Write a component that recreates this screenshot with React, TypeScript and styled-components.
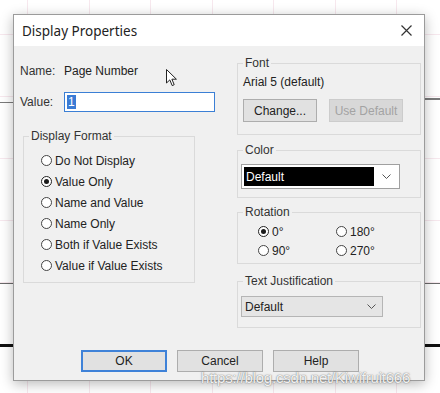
import styled, { createGlobalStyle } from "styled-components";

const GlobalStyle = createGlobalStyle`
  html, body {
    margin: 0;
    padding: 0;
  }
  body {
    width: 440px;
    height: 393px;
    overflow: hidden;
    font-family: "Liberation Sans", Arial, sans-serif;
    background:
      linear-gradient(#7a7a7a, #7a7a7a) 0 102px / 14px 1px no-repeat,
      linear-gradient(#7a7a7a, #7a7a7a) 424px 98px / 16px 2px no-repeat,
      linear-gradient(#6a6a6a, #6a6a6a) 0 283px / 440px 1px no-repeat,
      linear-gradient(#111, #111) 0 344px / 440px 3px no-repeat,
      repeating-linear-gradient(90deg, transparent 0 27px, #f7e8ee 27px 28px, transparent 28px 61.5px),
      repeating-linear-gradient(180deg, transparent 0 34px, #f7e8ee 34px 35px, transparent 35px 62px),
      #fff;
  }
`;

const Page = styled.div`
  position: relative;
  padding: 14px 15px 12px 13px;
`;

const Dialog = styled.div`
  position: relative;
  box-sizing: border-box;
  width: 412px;
  height: 367px;
  display: flex;
  flex-direction: column;
  background: #f0f0f0;
  border: 1px solid #9b9b9b;
  box-shadow: 0 3px 12px rgba(0, 0, 0, 0.28);
`;

const TitleBar = styled.div`
  height: 31px;
  display: flex;
  align-items: center;
  justify-content: space-between;
  padding: 0 12px 0 8px;
  background: #fff;
`;

const Title = styled.span`
  font-family: "Noto Sans", "Open Sans", sans-serif;
  font-size: 13.5px;
  color: #222;
`;

const Body = styled.div`
  flex: 1;
  display: flex;
  flex-direction: column;
  padding: 9px 3px 8px 6px;
  font-size: 12px;
  color: #222;
`;

const Columns = styled.div`
  display: grid;
  grid-template-columns: 210px 184px;
  column-gap: 7px;
  align-items: start;
`;

const Column = styled.div<{ $top?: number }>`
  display: flex;
  flex-direction: column;
  padding-top: ${(p) => p.$top ?? 0}px;
`;

const FieldRow = styled.div<{ $h: number; $top: number }>`
  display: flex;
  align-items: center;
  height: ${(p) => p.$h}px;
  margin-top: ${(p) => p.$top}px;
`;

const FieldLabel = styled.span`
  width: 44px;
  color: #333;
`;

const TextInput = styled.div`
  box-sizing: border-box;
  width: 151px;
  height: 20px;
  display: flex;
  align-items: center;
  padding-left: 2px;
  background: #fff;
  border: 1px solid #3b7fd5;
`;

const Selected = styled.span`
  background: #3a7bd5;
  color: #fff;
  line-height: 14px;
  padding: 0 1px;
`;

const GroupBox = styled.fieldset<{ $w: number; $top: number; $left?: number }>`
  box-sizing: border-box;
  width: ${(p) => p.$w}px;
  margin: ${(p) => p.$top}px 0 0 ${(p) => p.$left ?? 0}px;
  padding: 0;
  border: 1px solid #dadada;
  min-width: 0;
`;

const Legend = styled.legend`
  margin-left: 5px;
  padding: 0 2px;
  font-size: 12px;
  line-height: 14px;
  color: #333;
`;

const GroupBody = styled.div<{ $pad: string }>`
  padding: ${(p) => p.$pad};
`;

const RadioList = styled.div<{ $cols: number; $row: number }>`
  display: grid;
  grid-template-columns: repeat(${(p) => p.$cols}, 78px);
  grid-auto-rows: ${(p) => p.$row}px;
`;

const RadioItem = styled.label`
  display: flex;
  align-items: center;
  gap: 3px;
  white-space: nowrap;
  color: #222;
`;

const RadioCircle = styled.span<{ $on?: boolean }>`
  box-sizing: border-box;
  flex-shrink: 0;
  width: 11px;
  height: 11px;
  border-radius: 50%;
  border: 1px solid ${(p) => (p.$on ? "#222" : "#444")};
  background: #fff;
  display: flex;
  align-items: center;
  justify-content: center;

  &::after {
    content: "";
    display: ${(p) => (p.$on ? "block" : "none")};
    width: 5px;
    height: 5px;
    border-radius: 50%;
    background: #1a1a1a;
  }
`;

const InfoText = styled.div`
  height: 14px;
  line-height: 14px;
`;

const ButtonRow = styled.div<{ $gap: number; $top: number }>`
  display: flex;
  gap: ${(p) => p.$gap}px;
  margin-top: ${(p) => p.$top}px;
`;

const Button = styled.button<{ $w: number; $h: number; $focus?: boolean }>`
  box-sizing: border-box;
  width: ${(p) => p.$w}px;
  height: ${(p) => p.$h}px;
  padding: 0;
  font-family: "Liberation Sans", Arial, sans-serif;
  font-size: 12px;
  color: ${(p) => (p.disabled ? "#a3a3a3" : "#222")};
  background: ${(p) => (p.disabled ? "#d8d8d8" : "#e1e1e1")};
  border: ${(p) => (p.$focus ? "2px solid #3f82d8" : p.disabled ? "1px solid #cccccc" : "1px solid #adadad")};
`;

const SelectBox = styled.div<{ $w: number; $h: number; $flat?: boolean }>`
  box-sizing: border-box;
  width: ${(p) => p.$w}px;
  height: ${(p) => p.$h}px;
  display: flex;
  align-items: center;
  padding: ${(p) => (p.$flat ? "0 6px 0 3px" : "2px 8px 2px 2px")};
  gap: 8px;
  background: ${(p) => (p.$flat ? "#e5e5e5" : "#fff")};
  border: 1px solid ${(p) => (p.$flat ? "#b5b5b5" : "#a0a0a0")};
`;

const Swatch = styled.div`
  flex: 1;
  align-self: stretch;
  display: flex;
  align-items: center;
  padding-left: 2px;
  background: #000;
  color: #fff;
`;

const SelectText = styled.span`
  flex: 1;
  color: #222;
`;

const Footer = styled.div`
  margin-top: auto;
  display: flex;
  gap: 10px;
  padding-left: 61px;
`;

const Cursor = styled.svg`
  position: absolute;
  left: 152px;
  top: 54px;
`;

const Watermark = styled.div`
  position: absolute;
  left: 201px;
  top: 369px;
  font-family: "Liberation Sans", Arial, sans-serif;
  font-size: 15px;
  letter-spacing: -0.2px;
  color: rgba(255, 255, 255, 0.92);
  text-shadow: 0 0 1px rgba(80, 80, 80, 0.8), 0 0 2px rgba(120, 120, 120, 0.5);
`;

const Chevron = ({ w = 9 }: { w?: number }) => (
  <svg width={w} height="5" viewBox="0 0 9 5">
    <polyline points="0.5,0.5 4.5,4.5 8.5,0.5" fill="none" stroke="#555" strokeWidth="1" />
  </svg>
);

const formats = [
  "Do Not Display",
  "Value Only",
  "Name and Value",
  "Name Only",
  "Both if Value Exists",
  "Value if Value Exists",
];

const rotations = ["0°", "180°", "90°", "270°"];

export default function App() {
  return (
    <>
      <GlobalStyle />
      <Page>
        <Dialog>
          <TitleBar>
            <Title>Display Properties</Title>
            <svg width="11" height="11" viewBox="0 0 11 11">
              <path d="M0.5 0.5 L10.5 10.5 M10.5 0.5 L0.5 10.5" stroke="#333" strokeWidth="1.2" />
            </svg>
          </TitleBar>
          <Body>
            <Columns>
              <Column>
                <FieldRow $h={16} $top={8}>
                  <FieldLabel>Name:</FieldLabel>
                  <span>Page Number</span>
                </FieldRow>
                <FieldRow $h={21} $top={12}>
                  <FieldLabel>Value:</FieldLabel>
                  <TextInput>
                    <Selected>1</Selected>
                  </TextInput>
                </FieldRow>
                <GroupBox $w={172} $top={17} $left={3}>
                  <Legend>Display Format</Legend>
                  <GroupBody $pad="7px 0 6px 17px">
                    <RadioList $cols={1} $row={21}>
                      {formats.map((f, i) => (
                        <RadioItem key={f}>
                          <RadioCircle $on={i === 1} />
                          {f}
                        </RadioItem>
                      ))}
                    </RadioList>
                  </GroupBody>
                </GroupBox>
              </Column>

              <Column $top={1}>
                <GroupBox $w={184} $top={0}>
                  <Legend>Font</Legend>
                  <GroupBody $pad="5px 0 12px 5px">
                    <InfoText>Arial 5 (default)</InfoText>
                    <ButtonRow $gap={12} $top={10}>
                      <Button $w={74} $h={23}>Change...</Button>
                      <Button $w={74} $h={23} disabled>
                        Use Default
                      </Button>
                    </ButtonRow>
                  </GroupBody>
                </GroupBox>

                <GroupBox $w={184} $top={8}>
                  <Legend>Color</Legend>
                  <GroupBody $pad="7px 0 8px 3px">
                    <SelectBox $w={159} $h={25}>
                      <Swatch>Default</Swatch>
                      <Chevron />
                    </SelectBox>
                  </GroupBody>
                </GroupBox>

                <GroupBox $w={184} $top={7}>
                  <Legend>Rotation</Legend>
                  <GroupBody $pad="3px 0 3px 20px">
                    <RadioList $cols={2} $row={19}>
                      {rotations.map((r, i) => (
                        <RadioItem key={r}>
                          <RadioCircle $on={i === 0} />
                          {r}
                        </RadioItem>
                      ))}
                    </RadioList>
                  </GroupBody>
                </GroupBox>

                <GroupBox $w={184} $top={10}>
                  <Legend>Text Justification</Legend>
                  <GroupBody $pad="8px 0 10px 3px">
                    <SelectBox $w={142} $h={21} $flat>
                      <SelectText>Default</SelectText>
                      <Chevron />
                    </SelectBox>
                  </GroupBody>
                </GroupBox>
              </Column>
            </Columns>

            <Footer>
              <Button $w={86} $h={22} $focus>OK</Button>
              <Button $w={86} $h={22}>Cancel</Button>
              <Button $w={86} $h={22}>Help</Button>
            </Footer>
          </Body>

          <Cursor width="12" height="18" viewBox="0 0 12 18">
            <path
              d="M0.5 0.5 L0.5 14 L3.8 10.9 L6.2 16.6 L8.2 15.7 L5.9 10.2 L10.4 10.2 Z"
              fill="#fff"
              stroke="#222"
              strokeWidth="1"
              strokeLinejoin="round"
            />
          </Cursor>
        </Dialog>
        <Watermark>https://blog.csdn.net/Kiwifruit666</Watermark>
      </Page>
    </>
  );
}
